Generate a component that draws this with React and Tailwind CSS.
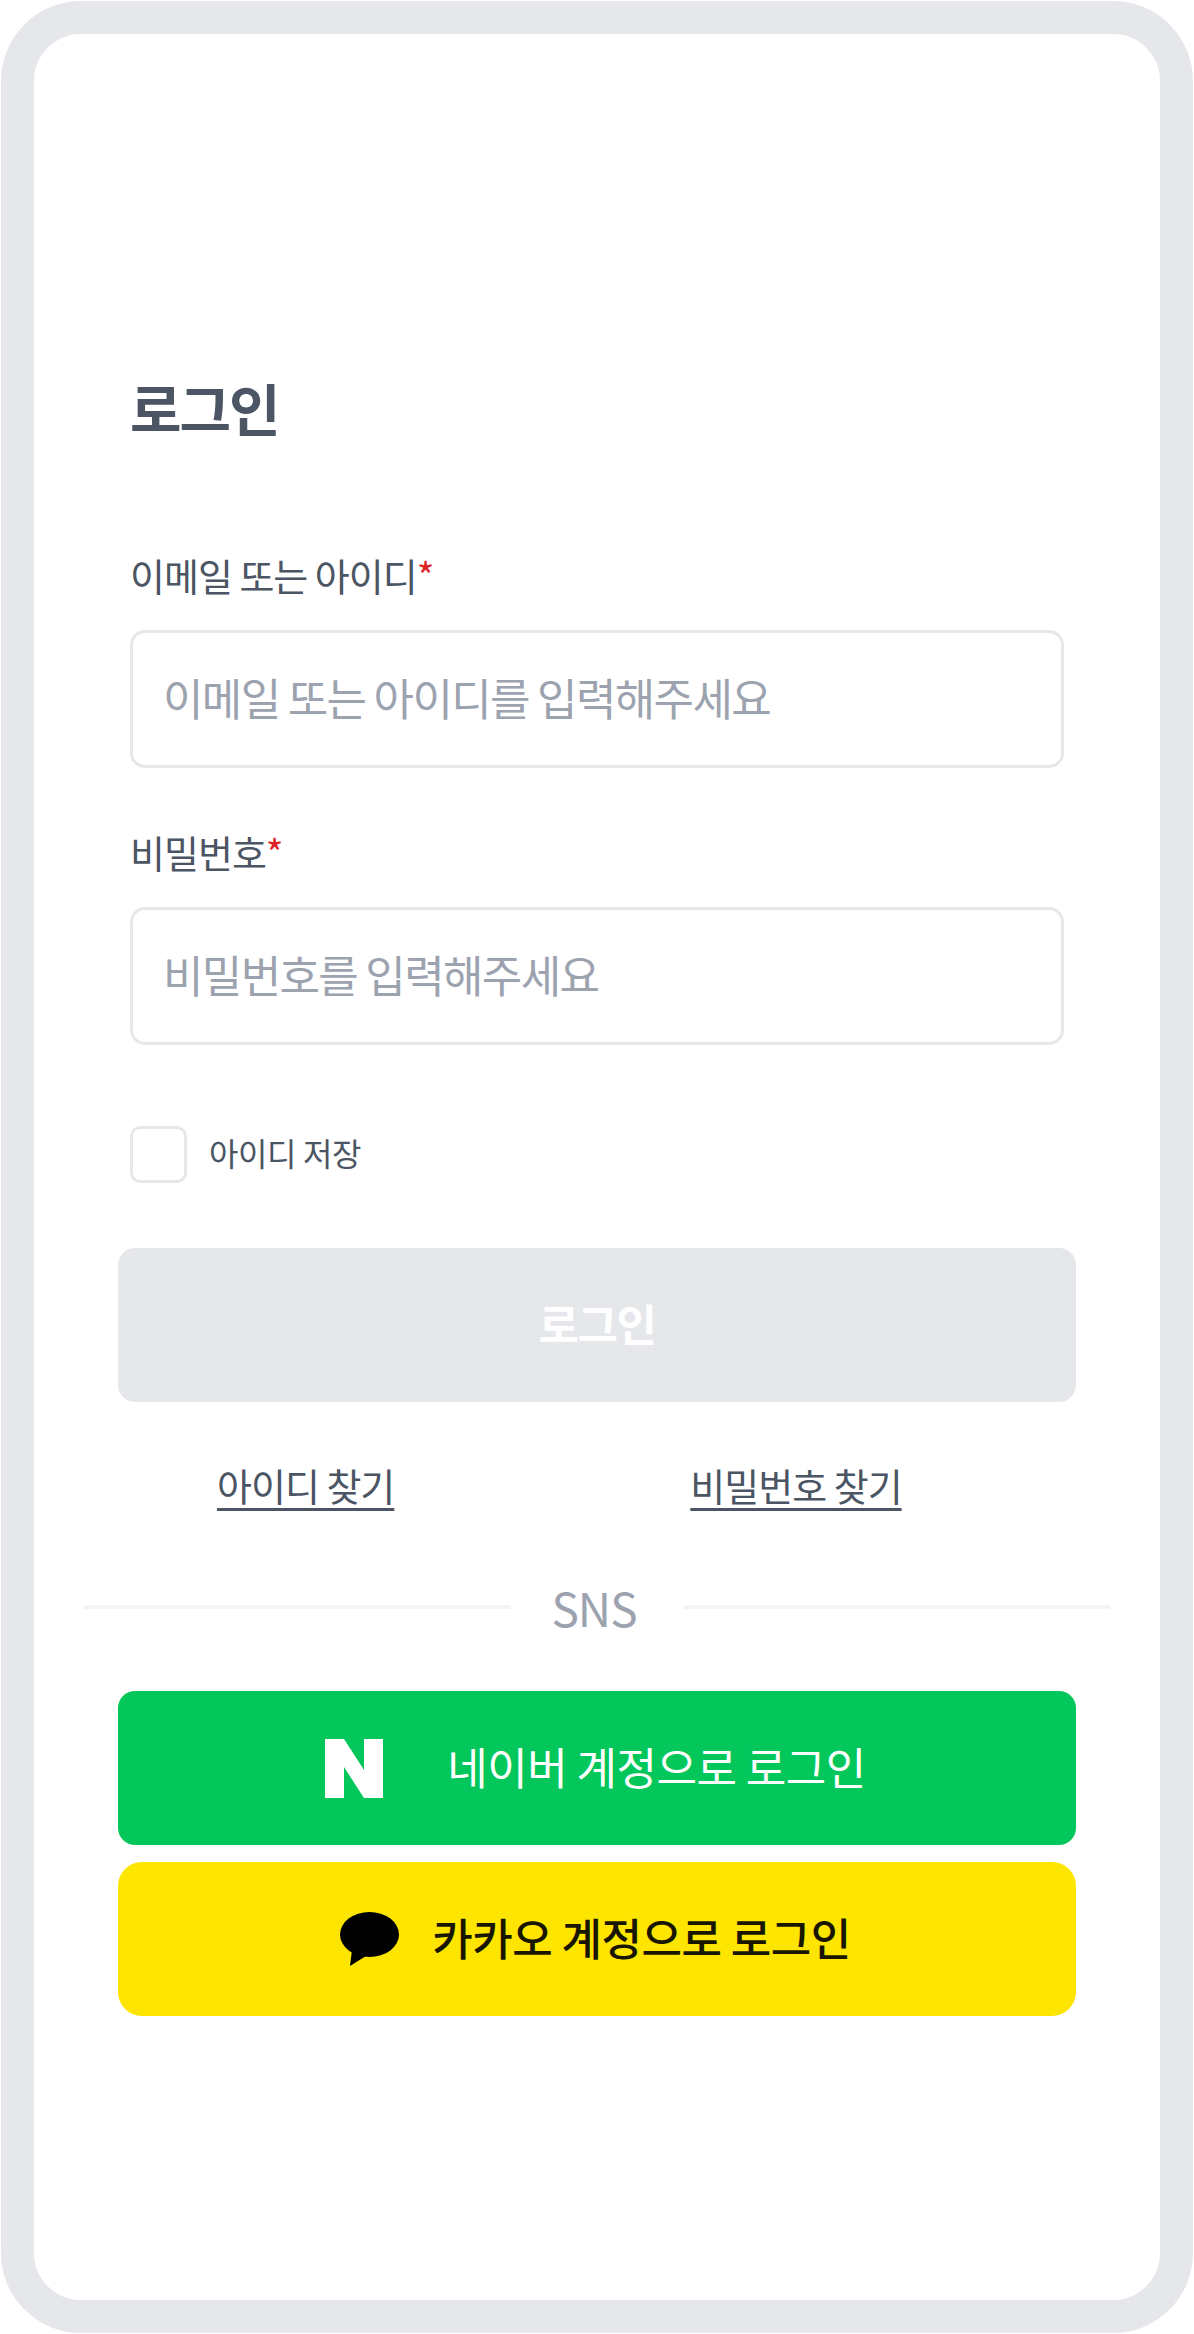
export default function App() {
  return (
    <div className="p-px bg-white font-['Noto_Sans_CJK_KR','Noto_Sans',sans-serif]">
      <div className="h-[2332px] border-[33px] border-[#e5e7eb] rounded-[80px] bg-white pt-[335px]">
        <div className="px-[96px]">
          <h1 className="text-[56px] leading-[76px] tracking-[-2px] font-bold text-[#4b5563]">로그인</h1>
          <label className="block mt-[103px] text-[38px] leading-[54px] tracking-[-1px] text-[#4b5563]">이메일 또는 아이디<span className="text-[#dc2626]">*</span></label>
          <input placeholder="이메일 또는 아이디를 입력해주세요" className="block mt-[28px] w-full h-[138px] pl-[30px] pr-[30px] pb-[5px] border-[3px] border-[#e5e7eb] rounded-[15px] text-[44px] tracking-[-1.65px] outline-none placeholder:text-[#9ca3af]" />
          <label className="block mt-[57px] text-[38px] leading-[54px] tracking-[-1px] text-[#4b5563]">비밀번호<span className="text-[#dc2626]">*</span></label>
          <input placeholder="비밀번호를 입력해주세요" className="block mt-[28px] w-full h-[138px] pl-[30px] pr-[30px] pb-[4px] border-[3px] border-[#e5e7eb] rounded-[15px] text-[44px] tracking-[-1.65px] outline-none placeholder:text-[#9ca3af]" />
          <div className="flex items-center gap-[22px] mt-[81px]">
            <div className="w-[57px] h-[57px] border-[3px] border-[#e5e7eb] rounded-[10px]" />
            <span className="pb-[5px] text-[32px] leading-[44px] tracking-[-0.4px] text-[#4b5563]">아이디 저장</span>
          </div>
        </div>
        <div className="px-[84px] mt-[65px]">
          <button className="block w-full h-[154px] pb-[5px] rounded-[17px] bg-[#e5e7eb] text-white text-[44px] tracking-[-1.5px] font-bold">로그인</button>
          <div className="flex mt-[56px] text-[38px] leading-[54px] tracking-[-1px] text-[#4b5563]">
            <a className="ml-[99px] underline underline-offset-[7px] decoration-[3px]">아이디 찾기</a>
            <a className="ml-[296px] underline underline-offset-[7px] decoration-[3px]">비밀번호 찾기</a>
          </div>
        </div>
        <div className="flex items-center px-[50px] mt-[64px]">
          <div className="flex-1 h-[4px] bg-[#f3f4f6]" />
          <span className="w-[173px] pr-[6px] text-center text-[46px] leading-[62px] tracking-[-1px] text-[#9ca3af]">SNS</span>
          <div className="flex-1 h-[4px] bg-[#f3f4f6]" />
        </div>
        <div className="px-[84px] mt-[53px] flex flex-col gap-[17px]">
          <button className="flex items-center justify-center gap-[64px] h-[154px] pr-[3px] rounded-[17px] bg-[#03c75a] text-white text-[44px] tracking-[-0.5px]">
            <svg width="58" height="59" viewBox="0 0 58 59"><path d="M0 0H19L39 31V0H58V59H39L19 28V59H0Z" fill="#fff" /></svg>
            <span className="pb-[5px]">네이버 계정으로 로그인</span>
          </button>
          <button className="flex items-center justify-center gap-[33px] h-[154px] pr-[3px] rounded-[24px] bg-[#fee500] text-[#191600] text-[44px] tracking-[-0.5px] font-medium">
            <svg width="59" height="55" viewBox="0 0 59 55"><ellipse cx="29.500" cy="22.500" rx="29.500" ry="22.500" fill="#000" /><path d="M12 38L10 54L26 44Z" fill="#000" /></svg>
            <span className="pb-[5px]">카카오 계정으로 로그인</span>
          </button>
        </div>
      </div>
    </div>
  );
}
